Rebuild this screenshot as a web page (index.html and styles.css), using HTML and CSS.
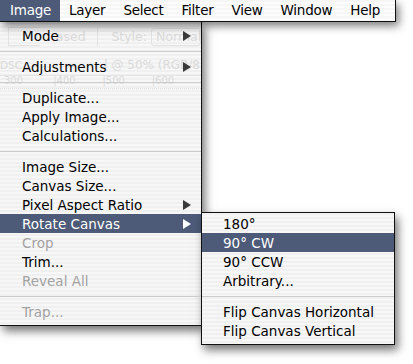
FILE: index.html
```html
<!DOCTYPE html>
<html lang="en">
<head>
    <meta charset="UTF-8">
    <meta name="viewport" content="width=device-width, initial-scale=1.0">
    <title>Image Menu</title>
    <link rel="stylesheet" href="styles.css">
</head>
<body>
    <div class="screen">
        <div class="menubar">
            <span class="title active">Image</span>
            <span class="title">Layer</span>
            <span class="title">Select</span>
            <span class="title">Filter</span>
            <span class="title">View</span>
            <span class="title">Window</span>
            <span class="title">Help</span>
        </div>

        <div class="menu main-menu">
            <!-- document window showing through the menu -->
            <div class="ghost">
                <div class="ghost-options">
                    <span class="ghost-field"></span>
                    <span>ased</span>
                    <span class="ghost-divider"></span>
                    <span>Style:</span>
                    <span class="ghost-box">Normal</span>
                </div>
                <div class="ghost-title">
                    <span>DSC</span>
                    <span>l @ 50% (RGB/8</span>
                </div>
                <div class="ghost-ruler">
                    <span>300</span>
                    <span>|400</span>
                    <span>|500</span>
                    <span>|600</span>
                </div>
            </div>

            <div class="item sub">Mode <span class="arrow"></span></div>
            <div class="sep"></div>
            <div class="item sub">Adjustments <span class="arrow"></span></div>
            <div class="sep"></div>
            <div class="item">Duplicate...</div>
            <div class="item">Apply Image...</div>
            <div class="item">Calculations...</div>
            <div class="sep"></div>
            <div class="item">Image Size...</div>
            <div class="item">Canvas Size...</div>
            <div class="item sub">Pixel Aspect Ratio <span class="arrow"></span></div>
            <div class="item sub active">Rotate Canvas <span class="arrow"></span>
                <div class="menu submenu">
                    <div class="item">180°</div>
                    <div class="item active">90° CW</div>
                    <div class="item">90° CCW</div>
                    <div class="item">Arbitrary...</div>
                    <div class="sep"></div>
                    <div class="item">Flip Canvas Horizontal</div>
                    <div class="item">Flip Canvas Vertical</div>
                </div>
            </div>
            <div class="item disabled">Crop</div>
            <div class="item">Trim...</div>
            <div class="item disabled">Reveal All</div>
            <div class="sep"></div>
            <div class="item disabled">Trap...</div>
        </div>
    </div>
</body>
</html>
```

FILE: styles.css
```css
body {
    margin: 0;
    background-color: #ffffff;
    font-family: 'DejaVu Sans', 'Liberation Sans', sans-serif;
    font-size: 13.5px;
    color: #000;
}

.screen {
    position: relative;
    width: 413px;
    height: 364px;
    overflow: hidden;
}

/* top menu bar */
.menubar {
    position: relative;
    z-index: 3;
    display: flex;
    width: 395px;
    height: 21px;
    border-right: 1px solid #111;
    border-bottom: 1px solid #111;
    background: repeating-linear-gradient(to bottom, #f6f6f6 0 2px, #fdfdfd 2px 4px);
    box-shadow: 3px 4px 8px rgba(0, 0, 0, 0.5);
}

.title {
    display: flex;
    align-items: center;
    padding: 0 9px;
    line-height: 21px;
    letter-spacing: -0.25px;
}

.title.active {
    padding-left: 10px;
    background-color: #4d5b78;
    color: #fff;
}

/* dropdown menus */
.menu {
    background: repeating-linear-gradient(to bottom, #f0f0f0 0 2px, #f7f7f7 2px 4px);
    box-shadow: 3px 5px 9px rgba(0, 0, 0, 0.55);
}

.main-menu {
    position: relative;
    z-index: 2;
    width: 201px;
    padding: 4px 0;
    border-right: 1px solid #111;
    border-bottom: 1px solid #111;
}

.item {
    position: relative;
    display: flex;
    align-items: center;
    justify-content: space-between;
    height: 19px;
    padding: 0 10px 0 22px;
    white-space: nowrap;
}

.item.active {
    background-color: #4d5b78;
    color: #fff;
}

.item.disabled {
    color: #a2a2a2;
}

.arrow {
    width: 0;
    height: 0;
    border-left: 8px solid #3a3a3a;
    border-top: 5px solid transparent;
    border-bottom: 5px solid transparent;
}

.item.active > .arrow {
    border-left-color: #fff;
}

.sep {
    height: 12px;
    position: relative;
}

.sep::after {
    content: "";
    position: absolute;
    left: 0;
    right: 0;
    top: 6px;
    height: 1px;
    background-color: #cbcbcb;
}

.submenu {
    position: absolute;
    top: -2px;
    left: 100%;
    width: 192px;
    padding: 1px 0 4px;
    border: 1px solid #111;
    color: #000;
}

.submenu .item {
    padding-left: 21px;
}

/* faint document window behind the translucent menu */
.ghost {
    position: absolute;
    left: 0;
    top: 0;
    width: 201px;
    height: 72px;
    overflow: hidden;
    color: #dadada;
    pointer-events: none;
}

.ghost-options {
    display: flex;
    align-items: center;
    height: 19px;
    margin-top: 5px;
    font-size: 12.5px;
}

.ghost-field {
    width: 40px;
    height: 17px;
    margin: 0 16px 0 8px;
    border: 1px solid #e2e2e2;
    border-right: none;
}

.ghost-divider {
    width: 1px;
    height: 19px;
    margin: 0 14px 0 11px;
    background-color: #e2e2e2;
}

.ghost-box {
    width: 44px;
    height: 16px;
    margin-left: 4px;
    padding-left: 4px;
    border: 1px solid #e2e2e2;
    border-radius: 3px;
    line-height: 16px;
}

.ghost-title {
    display: flex;
    align-items: center;
    justify-content: space-between;
    height: 18px;
    margin-top: 10px;
    padding-right: 1px;
    font-size: 12px;
}

.ghost-title span:first-child {
    font-size: 10.5px;
}

.ghost-ruler {
    display: flex;
    margin-top: 1px;
    padding-left: 4px;
    height: 12px;
    font-size: 10px;
    line-height: 10px;
    border-top: 1px solid #e4e4e4;
    border-bottom: 1px dotted #e0e0e0;
}

.ghost-ruler span {
    width: 50px;
}
```
